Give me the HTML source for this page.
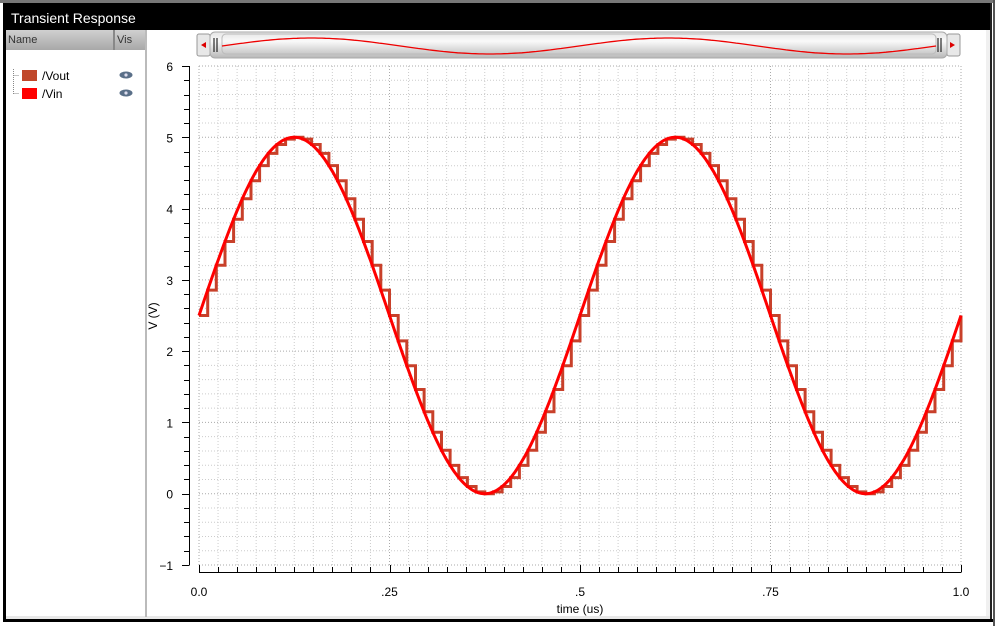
<!DOCTYPE html>
<html><head><meta charset="utf-8"><style>
html,body{margin:0;padding:0;width:995px;height:626px;overflow:hidden;background:#fff;font-family:"Liberation Sans",sans-serif}
</style></head><body>
<svg id="s" width="995" height="626" xmlns="http://www.w3.org/2000/svg" style="position:absolute;left:0;top:0">
<defs>
<linearGradient id="sb" x1="0" y1="0" x2="0" y2="1"><stop offset="0" stop-color="#e4e4e4"/><stop offset="0.35" stop-color="#fafafa"/><stop offset="1" stop-color="#b8b8b8"/></linearGradient>
<linearGradient id="hd" x1="0" y1="0" x2="0" y2="1"><stop offset="0" stop-color="#d0d0d0"/><stop offset="1" stop-color="#a8a8a8"/></linearGradient>
</defs>
<rect x="0" y="0" width="995" height="626" fill="#fff"/>
<rect x="0" y="0" width="995" height="3" fill="#777"/>
<rect x="3" y="3" width="988" height="27" fill="#000"/>
<text x="11" y="23" fill="#fff" font-size="14">Transient Response</text>
<rect x="3" y="3" width="3" height="617" fill="#000"/>
<rect x="990" y="3" width="2" height="617" fill="#222"/>
<rect x="993" y="0" width="2" height="626" fill="#555"/>
<rect x="3" y="619" width="990" height="3" fill="#000"/>
<rect x="6" y="616" width="984" height="3" fill="#e8e8e8"/>
<rect x="986" y="30" width="4" height="586" fill="#f0f0f0"/>
<rect x="6" y="30" width="108" height="20" fill="url(#hd)"/>
<rect x="115" y="30" width="31" height="20" fill="url(#hd)"/>
<rect x="113" y="30" width="2" height="20" fill="#888"/>
<text x="8" y="43" font-size="11" fill="#333">Name</text>
<text x="117" y="43" font-size="11" fill="#333">Vis</text>
<rect x="145" y="30" width="2" height="587" fill="#bbb"/>
<path d="M13.5 69v25M13.5 75.5h6M13.5 93.5h6" stroke="#888" stroke-dasharray="1 1" fill="none"/>
<rect x="22" y="70" width="15" height="11" fill="#c0472a"/>
<rect x="22" y="88" width="15" height="11" fill="#ff0000"/>
<text x="42" y="80" font-size="12">/Vout</text>
<text x="42" y="98" font-size="12">/Vin</text>
<g fill="#5a6f88"><ellipse cx="126" cy="75" rx="6.5" ry="3.5"/><ellipse cx="126" cy="93" rx="6.5" ry="3.5"/></g>
<g fill="#dde"><circle cx="126" cy="75" r="1.6"/><circle cx="126" cy="93" r="1.6"/></g>
<rect x="197" y="34" width="13" height="22" rx="2" fill="#e8e8e8" stroke="#999"/>
<path d="M201 45l5-3v6z" fill="#d00"/>
<rect x="947" y="34" width="13" height="22" rx="2" fill="#e8e8e8" stroke="#999"/>
<path d="M955 45l-5-3v6z" fill="#d00"/>
<rect x="210" y="32" width="737" height="26" rx="5" fill="url(#sb)" stroke="#aaa"/>
<rect x="222" y="34" width="714" height="20" rx="4" fill="none" stroke="#bbb"/>
<path d="M214 38v14M217 38v14M938 38v14M941 38v14" stroke="#000"/>
<path id="mini" fill="none" stroke="#e00" stroke-width="1.3"/>
<g id="grid"></g>
<g id="axes" stroke="#000" fill="none"></g>
<g id="lbl" font-size="12" fill="#000"></g>
<path id="vout" fill="none" stroke="#c8402a" stroke-width="3" stroke-linejoin="miter"/>
<path id="vin" fill="none" stroke="#ff0000" stroke-width="3"/>
<text x="580" y="613" font-size="12" text-anchor="middle">time (us)</text>
<text transform="translate(157,316) rotate(-90)" font-size="12" text-anchor="middle">V (V)</text>
</svg>
<script>
var NS="http://www.w3.org/2000/svg";
function el(p,t,a,tx){var e=document.createElementNS(NS,t);for(var k in a)e.setAttribute(k,a[k]);if(tx)e.textContent=tx;document.getElementById(p).appendChild(e);}
var x0=199,x1=961,y6=66,ym1=565,pv=(ym1-y6)/7;
function X(t){return x0+(x1-x0)*t;} function Y(v){return y6+(6-v)*pv;}
for(var i=0;i<=40;i++){var x=X(i/40);el("grid","line",{x1:x,y1:y6,x2:x,y2:ym1,stroke:(i%10==0)?"#aaa":"#ccc","stroke-dasharray":"1 2"});}
for(var i=0;i<=35;i++){var y=Y(6-i*0.2);el("grid","line",{x1:x0,y1:y,x2:x1,y2:y,stroke:(i%5==0)?"#aaa":"#ccc","stroke-dasharray":"1 2"});}
el("axes","line",{x1:189.5,y1:y6,x2:189.5,y2:ym1});
for(var i=0;i<=35;i++){var y=Math.round(Y(6-i*0.2))+0.5;el("axes","line",{x1:(i%5==0)?182:184,y1:y,x2:189.5,y2:y});}
el("axes","line",{x1:x0,y1:572.5,x2:x1,y2:572.5});
for(var i=0;i<=40;i++){var x=Math.round(X(i/40))+0.5;el("axes","line",{x1:x,y1:(i%10==0)?565:567,x2:x,y2:572.5});}
for(var v=6;v>=-1;v--)el("lbl","text",{x:173,y:Y(v)+5,"text-anchor":"end"},v==-1?"−1":String(v));
var xl=["0.0",".25",".5",".75","1.0"];for(var i=0;i<5;i++)el("lbl","text",{x:X(i/4),y:596,"text-anchor":"middle"},xl[i]);
function vin(t){return 2.5+2.5*Math.sin(2*Math.PI*2*t);}
var d="";for(var i=0;i<=400;i++){var t=i/400;d+=(i?"L":"M")+X(t).toFixed(1)+" "+Y(vin(t)).toFixed(1);}
document.getElementById("vin").setAttribute("d",d);
var N=88,st=1/N,d2="";
for(var k=0;k<=N;k++){var t=k*st,v=vin(t),xa=X(t),xb=X(Math.min(1,t+st));
d2+=(k?"L":"M")+xa.toFixed(1)+" "+Y(v).toFixed(1)+"L"+xb.toFixed(1)+" "+Y(v).toFixed(1);}
document.getElementById("vout").setAttribute("d",d2);
var d3="";for(var i=0;i<=200;i++){var t=i/200;d3+=(i?"L":"M")+(222+714*t).toFixed(1)+" "+(46-8*Math.sin(4*Math.PI*t)).toFixed(1);}
document.getElementById("mini").setAttribute("d",d3);
</script>
</body></html>
